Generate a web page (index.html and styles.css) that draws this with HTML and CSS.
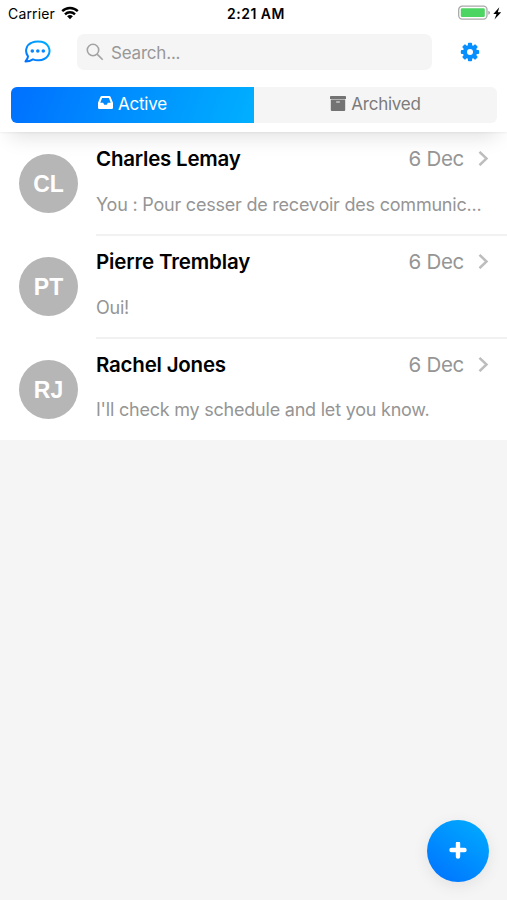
FILE: index.html
```html
<!DOCTYPE html>
<html lang="en">
<head>
<meta charset="utf-8">
<title>Messages</title>
<link rel="stylesheet" href="styles.css">
</head>
<body>
<div class="app">
  <header class="header">
    <div class="status">
      <div class="carrier"><span>Carrier</span>
        <svg width="18" height="14" viewBox="0 0 18 14" fill="none" stroke="#000" stroke-width="2.4"><path d="M1.2 5.2a11.2 11.2 0 0 1 15.6 0M4 8.3a7.2 7.2 0 0 1 10 0"/><path d="M9 13.2 6.1 10.3a4.2 4.2 0 0 1 5.8 0z" fill="#000" stroke="none"/></svg>
      </div>
      <div class="clock">2:21 AM</div>
      <div class="power">
        <svg width="44" height="16" viewBox="0 0 44 16"><rect x=".7" y="1.2" width="28.3" height="12.9" rx="3.5" fill="#fff" stroke="#a9a9a9" stroke-width="1.3"/><rect x="2.8" y="3.2" width="24" height="8.900" rx="1.3" fill="#4cd562"/><path d="M30.4 5.8q1.5 .7 1.5 2t-1.5 2z" fill="#999"/><path d="M41.300 2.300 35.300 9h3.200l-2 5.500 6.700-7.300h-3.400z"/></svg>
      </div>
    </div>
    <div class="tools">
      <svg class="chat" width="28" height="24" viewBox="0 0 28 24"><defs><linearGradient id="blue" x1="0" y1="1" x2="1" y2="0"><stop offset="0" stop-color="#0070ff"/><stop offset="1" stop-color="#00b0ff"/></linearGradient></defs><path d="M4 16.400C.3 11.1 2.3 5 7.8 2.700c6-2.700 14.200-1 16.700 4.200 3.200 6.500-1.600 12.900-9.800 13.400-2 .1-3.900-.2-5.700-1-2.100 1.300-4.400 2.100-7.500 2.200 1.500-1.700 2.400-3.200 2.500-5.100z" fill="none" stroke="url(#blue)" stroke-width="2" stroke-linejoin="round"/><g fill="#0787ff"><circle cx="8.3" cy="11" r="1.8"/><circle cx="13.8" cy="11" r="1.8"/><circle cx="19.3" cy="11" r="1.8"/></g></svg>
      <div class="search">
        <svg width="18" height="18" viewBox="0 0 18 18" fill="none" stroke="#a3a3a3" stroke-width="1.6"><circle cx="7" cy="7" r="5.7"/><path d="m11.1 11.1 5.6 5.6"/></svg>
        <span>Search...</span>
      </div>
      <svg class="gear" width="20" height="20" viewBox="-10 -10 20 20"><g fill="#078fff"><circle r="7.100"/><g id="teeth"><rect x="-2.100" y="-9.2" width="4.200" height="18.4" rx="1"/><rect x="-9.2" y="-2.100" width="18.4" height="4.200" rx="1"/></g><use href="#teeth" transform="rotate(45)"/></g><circle r="3" fill="#fff"/></svg>
    </div>
    <nav class="tabs">
      <div class="tab active">
        <svg width="15" height="13" viewBox="0 0 15 13"><path fill="#fff" fill-rule="evenodd" d="M3.7 0h7.6q.8 0 1.2.7L14.7 6q.3.5.3 1v4.7q0 1.3-1.3 1.3H1.3Q0 13 0 11.700V7q0-.5.3-1L2.500.7Q2.900 0 3.700 0zM4.100 1.900 2.300 6.700h2.900l1 2h2.600l1-2h2.900L10.900 1.900z"/></svg>
        <span>Active</span>
      </div>
      <div class="tab archived">
        <svg width="16" height="15" viewBox="0 0 16 15" fill="#737373"><path d="M.7 0h14.600q.7 0 .7.700V3H0V.7Q0 0 .7 0z"/><path fill-rule="evenodd" d="M.8 3.600h14.400V14q0 1-1 1H1.800q-1 0-1-1zM6.200 5.500v1h3.600v-1z"/></svg>
        <span>Archived</span>
      </div>
    </nav>
  </header>
  <main class="list">
    <article class="row"><div class="avatar">CL</div><div class="content">
      <div class="top"><h2>Charles Lemay</h2><time>6 Dec</time><svg width="11" height="16" viewBox="0 0 11 16"><path d="m1.500 1.800 7 6.700-7 6.700" fill="none" stroke="#bdbdbd" stroke-width="2.500"/></svg></div>
      <p>You : Pour cesser de recevoir des communic...</p></div></article>
    <article class="row"><div class="avatar">PT</div><div class="content">
      <div class="top"><h2 class="wide">Pierre Tremblay</h2><time>6 Dec</time><svg width="11" height="16" viewBox="0 0 11 16"><path d="m1.500 1.800 7 6.700-7 6.700" fill="none" stroke="#bdbdbd" stroke-width="2.500"/></svg></div>
      <p>Oui!</p></div></article>
    <article class="row"><div class="avatar">RJ</div><div class="content">
      <div class="top"><h2>Rachel Jones</h2><time>6 Dec</time><svg width="11" height="16" viewBox="0 0 11 16"><path d="m1.500 1.800 7 6.700-7 6.700" fill="none" stroke="#bdbdbd" stroke-width="2.500"/></svg></div>
      <p>I'll check my schedule and let you know.</p></div></article>
  </main>
  <div class="fab"><svg width="18" height="18" viewBox="0 0 18 18"><path d="M9 1.500v13M2.500 8h13" stroke="#fff" stroke-width="4.400" stroke-linecap="round"/></svg></div>
</div>
</body>
</html>
```
FILE: styles.css
```css
* { box-sizing: border-box; }
body { margin: 0; background: #f5f5f5; font-family: Inter, "Liberation Sans", sans-serif; }
svg { display: block; flex: none; }
.app { position: relative; height: 900px; overflow: hidden; display: flex; flex-direction: column; }
.header { position: relative; z-index: 1; flex: none; height: 132px; background: #fff; box-shadow: 0 1px 2px rgba(0,0,0,.05), 0 14px 20px -10px rgba(0,0,0,.13); }
.status { height: 27px; display: grid; grid-template-columns: 1fr auto 1fr; align-items: center; padding: 0 5px 0 8px; font-size: 14px; line-height: 27px; }
.carrier { display: flex; align-items: center; gap: 6px; letter-spacing: .15px; }
.carrier svg { margin-top: -1px; }
.clock { font-weight: 600; font-size: 14px; padding-left: 2px; letter-spacing: .5px; }
.power { display: flex; justify-content: flex-end; margin-top: -1px; }
.tools { display: flex; align-items: center; height: 50px; padding: 0 27px 0 24px; }
.search { display: flex; align-items: center; gap: 7px; width: 355px; height: 36px; margin-left: 25px; padding-left: 9px; border-radius: 7px; background: #f5f5f5; color: #989898; font-size: 17px; letter-spacing: -.2px; }
.search span { padding-top: 1px; }
.gear { margin-left: auto; }
.tabs { display: flex; height: 36px; margin: 10px 10px 0 11px; border-radius: 6px; overflow: hidden; background: #f5f5f5; font-size: 17px; line-height: 34px; letter-spacing: -.25px; }
.tab { display: flex; justify-content: center; gap: 5px; width: 243px; }
.tab svg { margin-top: 9px; }
.active { color: #fff; background: linear-gradient(110deg, #0070ff, #00b0ff); }
.archived { color: #7b7b7b; }
.list { background: #fff; height: 308px; display: grid; grid-template-rows: 104px 103px 101px; }
.row { display: flex; padding-left: 19px; }
.avatar { flex: none; width: 59px; height: 59px; margin-top: 22px; border-radius: 50%; background: #b6b6b6; color: #fff; font: bold 23px/60px "Liberation Sans", sans-serif; text-align: center; }
.row + .row .avatar { margin-top: 21px; }
.content { flex: 1; margin-left: 18px; border-bottom: 2px solid #f1f1f1; }
.row:last-child .content { border-bottom-color: #fff; }
.top { display: flex; align-items: center; height: 28px; margin-top: 12px; padding-right: 18px; }
.row + .row .top { margin-top: 11px; }
h2 { margin: 0; font-size: 20.500px; font-weight: 600; letter-spacing: -.22px; white-space: nowrap; }
.wide { letter-spacing: -.14px; }
time { margin-left: auto; margin-right: 14px; color: #959595; font-size: 20.500px; letter-spacing: -.3px; }
p { margin: 21px 0 0; color: #959595; font-size: 18px; line-height: 24px; letter-spacing: -.22px; white-space: nowrap; }
.row:last-child p { margin-top: 20px; }
.fab { position: absolute; right: 18px; bottom: 18px; width: 62px; height: 62px; border-radius: 50%; display: grid; place-items: center; background: linear-gradient(35deg, #0076ff 10%, #00a8ff 90%); box-shadow: 0 4px 16px rgba(0,0,0,.08); }
```
